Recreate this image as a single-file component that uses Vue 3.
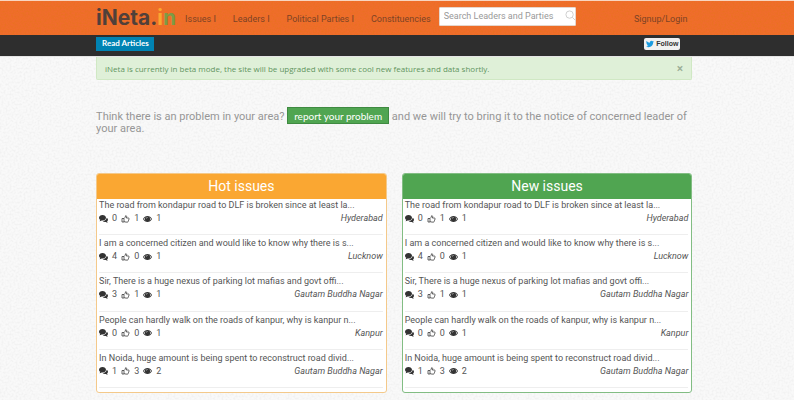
<template>
  <div class="page">
    <header class="topbar">
      <div class="wrap topbar-inner">
        <a class="logo" href="#">iNeta.<span class="logo-i">i</span><span class="logo-n">n</span></a>
        <nav class="nav">
          <a v-for="item in navItems" :key="item" href="#">{{ item }}</a>
        </nav>
        <form class="search" @submit.prevent>
          <input v-model="query" type="text" aria-label="Search Leaders and Parties" placeholder="Search Leaders and Parties" />
          <svg class="search-icon" viewBox="0 0 12 12" aria-hidden="true">
            <circle cx="5" cy="5" r="4" />
            <path d="M8 8l3 3" />
          </svg>
        </form>
        <a class="signup" href="#">Signup/Login</a>
      </div>
    </header>

    <div class="subbar">
      <div class="wrap subbar-inner">
        <a class="read-articles" href="#">Read Articles</a>
        <a class="follow" href="#">
          <svg viewBox="0 0 24 24" aria-hidden="true">
            <path d="M24 4.6a10 10 0 0 1-2.8.8 5 5 0 0 0 2.1-2.7 10 10 0 0 1-3.1 1.2 4.9 4.9 0 0 0-8.4 4.5A14 14 0 0 1 1.7 3.1a4.9 4.9 0 0 0 1.5 6.6 5 5 0 0 1-2.2-.6 4.9 4.9 0 0 0 3.9 4.8 5 5 0 0 1-2.2.1 4.9 4.9 0 0 0 4.6 3.4A10 10 0 0 1 0 19.5a14 14 0 0 0 7.5 2.2c9.1 0 14.3-7.7 14-14.6A10 10 0 0 0 24 4.6z" />
          </svg>
          Follow
        </a>
      </div>
    </div>

    <main class="wrap">
      <div v-if="showAlert" class="alert">
        <span>iNeta is currently in beta mode, the site will be upgraded with some cool new features and data shortly.</span>
        <button class="close" type="button" aria-label="Close" @click="showAlert = false">×</button>
      </div>

      <p class="report">
        Think there is an problem in your area?
        <button class="report-btn" type="button">report your problem</button>
        and we will try to bring it to the notice of concerned leader of your area.
      </p>

      <div class="panels">
        <section v-for="panel in panels" :key="panel.title" class="panel" :class="panel.type">
          <h2>{{ panel.title }}</h2>
          <ul>
            <li v-for="issue in issues" :key="issue.text">
              <a class="issue-title" href="#">{{ issue.text }}</a>
              <div class="meta">
                <svg class="icon" viewBox="0 0 18 16" aria-hidden="true">
                  <path d="M7 0C3.100 0 0 2.400 0 5.500c0 1.700 1 3.200 2.600 4.200C2.400 10.800 1.800 11.600 1 12.300c1.700-.1 3.200-.7 4.300-1.500.5.1 1.100.2 1.700.2 3.900 0 7-2.400 7-5.500S10.900 0 7 0z" />
                  <path d="M15.300 5.500c0 3.600-3.600 6.500-8 6.700C8.500 13.300 10.200 14 12 14c.6 0 1.100-.1 1.600-.2 1 .8 2.300 1.400 3.900 1.500-.7-.6-1.200-1.400-1.400-2.200C17.300 12.200 18 11 18 9.600c0-1.700-1.100-3.200-2.700-4.100z" />
                </svg>
                <span>{{ issue.comments }}</span>
                <svg class="icon like" viewBox="0 0 16 16" aria-hidden="true">
                  <path d="M1 7h4v7H1zM5 7c2-1.500 3-3 3.200-5.500C10.500 1 11 3.500 9.700 6H14c1.500 0 1.500 2 .3 2.300 1 .6.7 2-.4 2.200.7.8.2 1.900-.7 2 .4 1-.2 1.700-1.200 1.700H9c-1.500 0-2.500-.8-4-.8" />
                </svg>
                <span>{{ issue.likes }}</span>
                <svg class="icon" viewBox="0 0 18 16" aria-hidden="true">
                  <path fill-rule="evenodd" d="M0 8C2 4.200 5.200 2 9 2s7 2.200 9 6c-2 3.800-5.200 6-9 6s-7-2.200-9-6zm1.800 0c1 1.700 2.300 3 3.800 3.700a5 5 0 0 1 0-7.400C4.100 5 2.800 6.300 1.800 8zm14.400 0c-1-1.700-2.300-3-3.800-3.700a5 5 0 0 1 0 7.400c1.500-.7 2.800-2 3.800-3.700zM6.500 7h1A1.700 1.700 0 0 1 9.200 5.300v-1A2.700 2.700 0 0 0 6.500 7z" />
                </svg>
                <span>{{ issue.views }}</span>
                <em>{{ issue.place }}</em>
              </div>
            </li>
          </ul>
        </section>
      </div>
    </main>
  </div>
</template>

<script setup>
import { ref } from 'vue'

const query = ref('')
const showAlert = ref(true)

const navItems = ['Issues I', 'Leaders I', 'Political Parties I', 'Constituencies']

const panels = [
  { title: 'Hot issues', type: 'hot' },
  { title: 'New issues', type: 'new' }
]

const issues = [
  { text: 'The road from kondapur road to DLF is broken since at least la...', comments: 0, likes: 1, views: 1, place: 'Hyderabad' },
  { text: 'I am a concerned citizen and would like to know why there is s...', comments: 4, likes: 0, views: 1, place: 'Lucknow' },
  { text: 'Sir, There is a huge nexus of parking lot mafias and govt offi...', comments: 3, likes: 1, views: 1, place: 'Gautam Buddha Nagar' },
  { text: 'People can hardly walk on the roads of kanpur, why is kanpur n...', comments: 0, likes: 0, views: 1, place: 'Kanpur' },
  { text: 'In Noida, huge amount is being spent to reconstruct road divid...', comments: 1, likes: 3, views: 2, place: 'Gautam Buddha Nagar' }
]
</script>

<style>
body {
  background: #f9f9f9 url("data:image/svg+xml,%3Csvg xmlns='http://www.w3.org/2000/svg' width='120' height='120'%3E%3Cfilter id='n'%3E%3CfeTurbulence type='fractalNoise' baseFrequency='.5' numOctaves='2' stitchTiles='stitch'/%3E%3CfeColorMatrix values='0 0 0 0 .4 0 0 0 0 .4 0 0 0 0 .4 .25 0 0 0 -.1'/%3E%3C/filter%3E%3Crect width='120' height='120' filter='url(%23n)'/%3E%3C/svg%3E");
}
</style>

<style scoped>
.page {
  font-family: Roboto, "Liberation Sans", sans-serif;
  font-size: 9px;
  line-height: 13px;
  color: #555;
}

.page a {
  color: inherit;
  text-decoration: none;
}

.wrap {
  margin: 0 12.8% 0 12.1%;
}

.topbar {
  border-top: 1px solid #f8d5c0;
  background: #f06c2d url("data:image/svg+xml,%3Csvg xmlns='http://www.w3.org/2000/svg' width='120' height='120'%3E%3Cfilter id='n'%3E%3CfeTurbulence type='fractalNoise' baseFrequency='.6' numOctaves='2' stitchTiles='stitch'/%3E%3CfeColorMatrix values='0 0 0 0 .7 0 0 0 0 .2 0 0 0 0 0 .5 0 0 0 -.15'/%3E%3C/filter%3E%3Crect width='120' height='120' filter='url(%23n)'/%3E%3C/svg%3E");
}

.topbar-inner {
  display: flex;
  align-items: center;
  height: 34px;
  color: #7d4325;
}

.page .logo {
  font-family: Inter, sans-serif;
  font-size: 21px;
  line-height: 30px;
  font-weight: 700;
  color: #50403a;
}

.logo-i {
  color: #fba62f;
}

.logo-n {
  color: #7c9b45;
}

.nav {
  display: flex;
  gap: 17px;
  margin-left: 9px;
  padding-top: 3px;
  white-space: nowrap;
}

.search {
  position: relative;
  width: 137px;
  margin: 0 auto 3px 8px;
}

.search input {
  box-sizing: border-box;
  display: block;
  width: 100%;
  height: 19px;
  padding: 0 14px 1px 4px;
  border: 1px solid #e5d6cd;
  border-radius: 1px;
  background: #fff;
  font-family: inherit;
  font-size: 9px;
  color: #555;
}

.search input::placeholder {
  color: #999;
}

.search-icon {
  position: absolute;
  top: 3px;
  right: 0;
  width: 11px;
  height: 11px;
  fill: none;
  stroke: #ccc;
  stroke-width: 1;
}

.signup {
  padding-top: 3px;
  margin-right: 5px;
}

.subbar {
  background: #2e2e2e;
  border-bottom: 1px solid #e5e5e5;
}

.subbar-inner {
  display: flex;
  align-items: flex-start;
  justify-content: space-between;
  height: 19px;
  padding-top: 2px;
}

.page .read-articles {
  padding: 0 5px 1px 6px;
  background: #0083b3;
  font-family: Lato, sans-serif;
  font-size: 8px;
  font-weight: 700;
  color: #fff;
}

.page .follow {
  display: flex;
  align-items: center;
  gap: 2px;
  margin: 1px 12px 0 0;
  padding: 0 2px;
  border-radius: 2px;
  background: #f1f1f1;
  font-family: "Liberation Sans", sans-serif;
  font-size: 7px;
  line-height: 12px;
  font-weight: 700;
  color: #333;
}

.follow svg {
  width: 8px;
  height: 8px;
  fill: #1b9be0;
}

.alert {
  display: flex;
  justify-content: space-between;
  padding: 5px 8px 4px;
  border: 1px solid #d0e8c4;
  border-top: 0;
  border-radius: 0 0 2px 2px;
  background: #dff0d8;
  font-family: "Open Sans", sans-serif;
  font-size: 8px;
  color: #5f9560;
}

.close {
  padding: 0;
  border: 0;
  background: none;
  font-family: inherit;
  font-size: 12px;
  line-height: 11px;
  font-weight: 700;
  color: #9caf97;
}

.report {
  margin: 31px 0 38px;
  font-size: 11px;
  line-height: 12px;
  color: #969696;
}

.report-btn {
  margin: -4px 0;
  padding: 2px 6px 1px;
  border: 1px solid #3f8a41;
  background: #50a551;
  font-family: Lato, sans-serif;
  font-size: 10px;
  line-height: 12px;
  color: #fff;
}

.panels {
  display: grid;
  grid-template-columns: 1fr 1fr;
  gap: 15px;
}

.panel {
  border: 1px solid #f4c98a;
  border-radius: 3px;
  background: #fff;
  overflow: hidden;
}

.panel.new {
  border-color: #82bd83;
}

.panel h2 {
  margin: 0;
  background: #faa732;
  font-size: 14px;
  line-height: 25px;
  font-weight: 400;
  text-align: center;
  color: #fff;
}

.panel.new h2 {
  background: #50a551;
}

.panel ul {
  display: flex;
  flex-direction: column;
  min-height: 189px;
  margin: 0;
  padding: 0 3px 4px 2px;
  list-style: none;
}

.panel li {
  flex: 1 0 auto;
  padding: 2px 0 9px;
  border-bottom: 1px solid #eee;
}

.panel li:first-child {
  padding-top: 0;
}

.issue-title {
  display: block;
}

.meta {
  display: flex;
  align-items: center;
  gap: 4px;
}

.meta em {
  margin-left: auto;
}

.icon {
  width: 9px;
  height: 8px;
  fill: #333;
}

.icon.like {
  fill: none;
  stroke: #333;
  stroke-width: 1.5;
}
</style>
